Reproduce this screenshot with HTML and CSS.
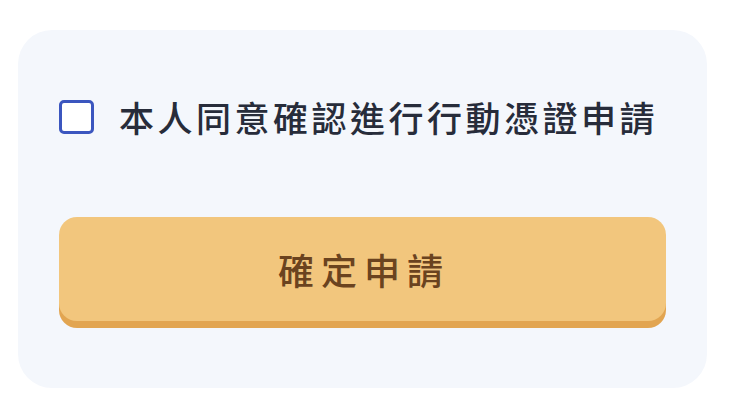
FILE: index.html
```html
<!DOCTYPE html>
<html lang="zh-Hant">
<head>
  <meta charset="UTF-8" />
  <meta name="viewport" content="width=device-width, initial-scale=1.0" />
  <title>行動憑證申請</title>
  <link rel="stylesheet" href="styles.css">
</head>
<body>
  <div class="card">
    <label class="agree">
      <input type="checkbox" class="agree-box" />
      <span class="agree-text">本人同意確認進行行動憑證申請</span>
    </label>
    <button class="submit-btn">確定申請</button>
  </div>
</body>
</html>
```

FILE: styles.css
```css
body {
  font-family: "Noto Sans CJK TC", "Noto Sans", sans-serif;
  background: #fff;
  margin: 0;
  padding: 30px 31px 6px 18px;
}
.card {
  display: flex;
  flex-direction: column;
  gap: 83px;
  background: #f4f7fc;
  border-radius: 34px;
  padding: 70px 41px 67px 41px;
}
.agree {
  display: flex;
  align-items: center;
  gap: 25px;
  height: 34px;
  cursor: pointer;
}
.agree-box {
  appearance: none;
  -webkit-appearance: none;
  margin: 0;
  width: 35px;
  height: 34px;
  box-sizing: border-box;
  border: 3px solid #3b56bf;
  border-radius: 5px;
  background: #fff;
  flex: none;
}
.agree-text {
  font-size: 35px;
  line-height: 34px;
  font-weight: 500;
  letter-spacing: 3.5px;
  color: #272c3a;
  white-space: nowrap;
}
.submit-btn {
  height: 104px;
  border: none;
  border-radius: 18px;
  background: #f2c67d;
  box-shadow: 0 7px 0 #e2a551;
  font-family: inherit;
  font-size: 36px;
  font-weight: 500;
  letter-spacing: 7px;
  padding-left: 9px;
  color: #6b431f;
  cursor: pointer;
}
```
